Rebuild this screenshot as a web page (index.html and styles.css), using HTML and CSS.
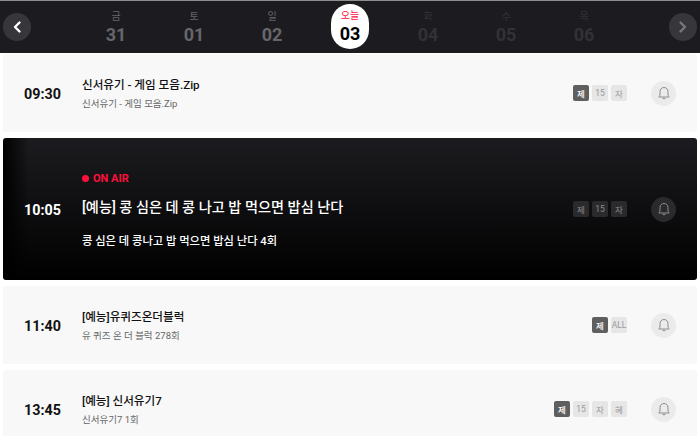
FILE: index.html
```html
<!DOCTYPE html>
<html lang="ko">
<head>
    <meta charset="UTF-8">
    <meta name="viewport" content="width=device-width, initial-scale=1.0">
    <title>편성표</title>
    <link rel="stylesheet" href="styles.css">
</head>

<body>
    <div class="date-bar">
        <button class="arrow">
            <svg viewBox="0 0 12 14" width="12" height="14"><path d="M8.5 2.5 4 7l4.5 4.5" fill="none" stroke="currentColor" stroke-width="2.4" stroke-linecap="round" stroke-linejoin="round"/></svg>
        </button>
        <div class="days">
            <div class="day past"><span class="dow">금</span><span class="num">31</span></div>
            <div class="day past"><span class="dow">토</span><span class="num">01</span></div>
            <div class="day past"><span class="dow">일</span><span class="num">02</span></div>
            <div class="day today"><span class="dow">오늘</span><span class="num">03</span></div>
            <div class="day future"><span class="dow">화</span><span class="num">04</span></div>
            <div class="day future"><span class="dow">수</span><span class="num">05</span></div>
            <div class="day future"><span class="dow">목</span><span class="num">06</span></div>
        </div>
        <button class="arrow arrow-next">
            <svg viewBox="0 0 12 14" width="12" height="14"><path d="M3.5 2.5 8 7l-4.5 4.5" fill="none" stroke="currentColor" stroke-width="2.4" stroke-linecap="round" stroke-linejoin="round"/></svg>
        </button>
    </div>

    <div class="schedule">
        <div class="program">
            <div class="time">09:30</div>
            <div class="info">
                <p class="title">신서유기 - 게임 모음.Zip</p>
                <p class="sub">신서유기 - 게임 모음.Zip</p>
            </div>
            <div class="badges">
                <span class="badge on">제</span><span class="badge">15</span><span class="badge">자</span>
            </div>
            <button class="bell">
                <svg viewBox="0 0 14 14" width="14" height="14"><path d="M1.8 11h10.4c-.9-.9-1.2-1.7-1.2-3V5.6C11 3.2 9.3 1.5 7 1.5S3 3.2 3 5.6V8c0 1.3-.3 2.1-1.2 3ZM5.6 12.6h2.8" fill="none" stroke="currentColor" stroke-width="1"/></svg>
            </button>
        </div>

        <div class="program live">
            <div class="time">10:05</div>
            <div class="info">
                <p class="on-air"><span class="dot"></span>ON AIR</p>
                <p class="title">[예능] 콩 심은 데 콩 나고 밥 먹으면 밥심 난다</p>
                <p class="sub">콩 심은 데 콩나고 밥 먹으면 밥심 난다 4회</p>
            </div>
            <div class="badges">
                <span class="badge">제</span><span class="badge">15</span><span class="badge">자</span>
            </div>
            <button class="bell">
                <svg viewBox="0 0 14 14" width="14" height="14"><path d="M1.8 11h10.4c-.9-.9-1.2-1.7-1.2-3V5.6C11 3.2 9.3 1.5 7 1.5S3 3.2 3 5.6V8c0 1.3-.3 2.1-1.2 3ZM5.6 12.6h2.8" fill="none" stroke="currentColor" stroke-width="1"/></svg>
            </button>
        </div>

        <div class="program">
            <div class="time">11:40</div>
            <div class="info">
                <p class="title">[예능]유퀴즈온더블럭</p>
                <p class="sub">유 퀴즈 온 더 블럭 278회</p>
            </div>
            <div class="badges">
                <span class="badge on">제</span><span class="badge">ALL</span>
            </div>
            <button class="bell">
                <svg viewBox="0 0 14 14" width="14" height="14"><path d="M1.8 11h10.4c-.9-.9-1.2-1.7-1.2-3V5.6C11 3.2 9.3 1.5 7 1.5S3 3.2 3 5.6V8c0 1.3-.3 2.1-1.2 3ZM5.6 12.6h2.8" fill="none" stroke="currentColor" stroke-width="1"/></svg>
            </button>
        </div>

        <div class="program">
            <div class="time">13:45</div>
            <div class="info">
                <p class="title">[예능] 신서유기7</p>
                <p class="sub">신서유기7 1회</p>
            </div>
            <div class="badges">
                <span class="badge on">제</span><span class="badge">15</span><span class="badge">자</span><span class="badge">혜</span>
            </div>
            <button class="bell">
                <svg viewBox="0 0 14 14" width="14" height="14"><path d="M1.8 11h10.4c-.9-.9-1.2-1.7-1.2-3V5.6C11 3.2 9.3 1.5 7 1.5S3 3.2 3 5.6V8c0 1.3-.3 2.1-1.2 3ZM5.6 12.6h2.8" fill="none" stroke="currentColor" stroke-width="1"/></svg>
            </button>
        </div>
    </div>
</body>
</html>
```

FILE: styles.css
```css
* {
    box-sizing: border-box;
    margin: 0;
    padding: 0;
}

html, body {
    height: 100%;
    overflow: hidden;
}

body {
    font-family: 'Roboto', 'Noto Sans CJK KR', sans-serif;
    background-color: white;
    color: #111;
}

button {
    border: none;
    font: inherit;
    cursor: pointer;
}

.date-bar {
    display: flex;
    align-items: center;
    justify-content: space-between;
    height: 53px;
    padding: 0 3px;
    background-color: #1c1c20;
    border-top: 1px solid #8e8e8e;
}

.arrow {
    display: flex;
    align-items: center;
    justify-content: center;
    width: 28px;
    height: 28px;
    border-radius: 50%;
    background-color: #37373b;
    color: white;
}

.arrow-next {
    color: #77777a;
}

.days {
    display: flex;
    justify-content: center;
}

.day {
    display: flex;
    flex-direction: column;
    align-items: center;
    justify-content: center;
    width: 78px;
    line-height: 1;
}

.dow {
    font-size: 10px;
    height: 14px;
    line-height: 14px;
}

.num {
    margin-top: 1px;
    font-size: 18px;
    font-weight: 700;
    line-height: 20px;
}

.past {
    color: #66666a;
}

.future {
    color: #323236;
}

.today {
    width: 38px;
    height: 45px;
    margin: 0 20px 1px;
    border-radius: 19px;
    background-color: white;
    color: black;
}

.today .dow {
    color: #ff0f3c;
}

.schedule {
    display: flex;
    flex-direction: column;
    gap: 6px;
    padding: 1px 3px 0;
}

.program {
    display: flex;
    flex-shrink: 0;
    align-items: center;
    height: 78px;
    padding: 0 21px;
    border-radius: 3px;
    background-color: #f8f8f8;
}

.time {
    width: 58px;
    flex-shrink: 0;
    padding-top: 1px;
    font-size: 14.3px;
    font-weight: 700;
}

.info {
    flex: 1;
    min-width: 0;
}

.title {
    font-size: 11.6px;
    font-weight: 500;
    line-height: 18px;
    color: #111;
}

.sub {
    margin-top: 3px;
    font-size: 9.5px;
    line-height: 14px;
    color: #666;
}

.badges {
    display: flex;
    gap: 3px;
    margin-right: 24px;
}

.badge {
    display: flex;
    align-items: center;
    justify-content: center;
    width: 16px;
    height: 16px;
    border-radius: 2px;
    background-color: #e6e6e6;
    color: #999;
    font-size: 8.5px;
    font-weight: 400;
}

.badge.on {
    background-color: #5f5f5f;
    color: white;
    font-weight: 500;
}

.bell {
    display: flex;
    align-items: center;
    justify-content: center;
    flex-shrink: 0;
    width: 25px;
    height: 25px;
    border-radius: 50%;
    background-color: #ebebeb;
    color: #8c8c8c;
}

.live {
    height: 142px;
    background: linear-gradient(90deg, #000 0, rgba(0, 0, 0, 0) 26px), linear-gradient(180deg, #1c1c20 0, #000 100%);
    color: white;
}

.live .info {
    padding-top: 3px;
}

.live .title {
    font-size: 14.2px;
    font-weight: 500;
    line-height: 20px;
    color: white;
}

.live .sub {
    margin-top: 17px;
    font-size: 11.3px;
    font-weight: 500;
    line-height: 16px;
    color: white;
}

.on-air {
    display: flex;
    align-items: center;
    gap: 4px;
    margin-bottom: 11px;
    font-size: 11px;
    font-weight: 700;
    line-height: 14px;
    color: #ff0f3c;
}

.dot {
    width: 7px;
    height: 7px;
    border-radius: 50%;
    background-color: #ff0f3c;
}

.live .badge {
    background-color: #2a2a2d;
    color: #8a8a8a;
}

.live .bell {
    background-color: #2a2a2c;
    color: #8c8c8c;
}
```
